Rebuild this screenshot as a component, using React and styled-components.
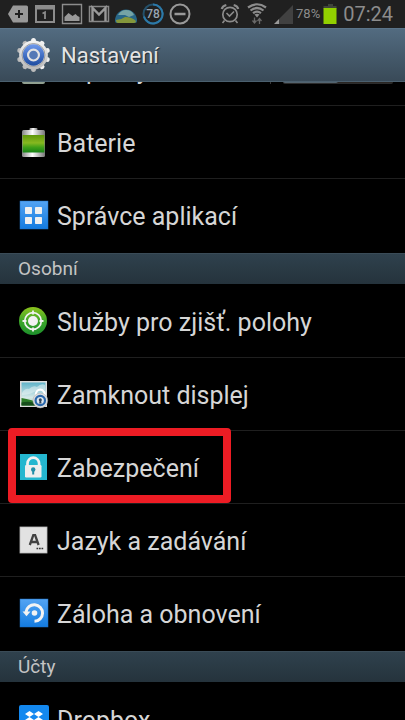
import React from "react";
import styled, { createGlobalStyle } from "styled-components";

const GlobalStyle = createGlobalStyle`
  *, *::before, *::after { box-sizing: border-box; }
  body { margin: 0; background: #000; font-family: Roboto, "Noto Sans", sans-serif; }
`;

const Screen = styled.div`
  display: flex;
  flex-direction: column;
  height: 100vh;
  overflow: hidden;
  background: #000;
  color: #d6d6d6;
`;

const StatusBar = styled.div`
  display: flex;
  flex: none;
  align-items: center;
  justify-content: space-between;
  height: 28px;
  padding: 0 12px 0 7px;
  background: #202020;
  color: #8c8c8c;
  position: relative;
  z-index: 1;
`;

const StatusGroup = styled.div`
  display: flex;
  align-items: center;
  gap: ${(p) => p.$gap}px;
`;

const Glyph = styled.svg`
  display: block;
  flex: none;
`;

const BatteryLevel = styled.span`
  font-size: 13px;
  line-height: 28px;
`;

const Clock = styled.time`
  font-size: 20px;
  line-height: 28px;
  margin-left: 3px;
`;

const Header = styled.header`
  display: flex;
  flex: none;
  align-items: center;
  gap: 10px;
  height: 54px;
  padding: 0 16px;
  background: linear-gradient(#526b80, #394a58);
  border-top: 1px solid #5b7489;
  border-bottom: 1px solid #4b606f;
  position: relative;
  z-index: 1;
`;

const Title = styled.h1`
  margin: 0;
  padding-top: 2px;
  font-size: 22px;
  line-height: 28px;
  font-weight: 400;
  color: #e4e4e4;
  text-shadow: 1px 1px 1px #1e2932;
`;

const Scroller = styled.main`
  flex: 1;
  min-height: 0;
  margin-top: -49px;
  overflow: hidden;
`;

const Group = styled.ul`
  list-style: none;
  margin: 0;
  padding: ${(p) => (p.$first ? 0 : 1)}px 0 1px;
`;

const Row = styled.li`
  display: flex;
  align-items: center;
  position: relative;
  height: 73px;
  padding-right: 12px;
  border-bottom: 1px solid #1f1f1f;

  &:last-child { border-bottom-color: transparent; }
`;

const RowButton = styled.button`
  display: flex;
  flex: 1;
  align-items: center;
  gap: 8px;
  height: 100%;
  padding: 0 0 0 18px;
  border: 0;
  background: none;
  color: inherit;
  font: inherit;
  text-align: left;
`;

const Label = styled.span`
  font-size: 25px;
  line-height: 32px;
  padding-top: 3px;
  white-space: nowrap;
`;

const SectionTitle = styled.h2`
  margin: 0;
  padding: 0 18px;
  font-size: 19px;
  line-height: 30px;
  height: 31px;
  font-weight: 400;
  color: #c4c4c4;
  background: linear-gradient(#2f414d, #25333c);
  border-top: 1px solid #3a4b57;
`;

const Highlight = styled.span`
  position: absolute;
  top: -3px;
  left: 8px;
  width: 223px;
  height: 75px;
  border: 8px solid #ed1c24;
  border-radius: 4px;
  pointer-events: none;
`;

const ToggleSlot = styled.div`
  display: flex;
  align-items: center;
  height: 30px;
  padding-left: 12px;
  border-left: 1px solid #3a3a3a;
`;

const Toggle = styled.button`
  display: flex;
  width: 110px;
  height: 29px;
  padding: 0;
  border: 0;
  border-bottom: 1px solid #2c2c2c;
  border-radius: 2px;
  background: #2a2623;

  &::before {
    content: "";
    width: 50%;
    border-radius: 2px;
    background: #53636e;
  }
`;

const GearIcon = () => (
  <Glyph width="35" height="36" viewBox="0 0 36 36">
    <defs>
      <linearGradient id="gearRim" x1="0" y1="0" x2="0" y2="1">
        <stop offset="0" stopColor="#f4f4f4" /><stop offset="1" stopColor="#b9b9b9" />
      </linearGradient>
      <linearGradient id="gearBlue" x1="0" y1="0" x2="0" y2="1">
        <stop offset="0" stopColor="#6d98ec" /><stop offset="1" stopColor="#1d4b9f" />
      </linearGradient>
    </defs>
    <g fill="url(#gearRim)">
      {[0, 36, 72, 108, 144].map((a) => (
        <path key={a} d="M15.200 5 L15.800 1.500 Q18 -.3 20.200 1.500 L20.800 5 V31 L20.200 34.500 Q18 36.300 15.800 34.500 L15.200 31Z" transform={`rotate(${a} 18 18)`} />
      ))}
      <circle cx="18" cy="18" r="14.800" />
    </g>
    <circle cx="18" cy="18" r="11.800" fill="#d8d8d8" stroke="#8c8c8c" strokeWidth=".8" />
    <circle cx="18" cy="18" r="11" fill="url(#gearBlue)" />
    <circle cx="18" cy="18" r="5.600" fill="#5579b6" stroke="#e2e2e2" strokeWidth="2.200" />
  </Glyph>
);

const Icon = ({ children }) => (
  <Glyph width="31" height="32" viewBox="0 0 31 32" aria-hidden="true">{children}</Glyph>
);

const PowerSavingIcon = () => (
  <Icon><rect x="4" y="3" width="23" height="28" rx="2" fill="#91a091" /><rect x="7" y="6" width="17" height="21" fill="#3f8f35" /></Icon>
);

const BatteryIcon = () => (
  <Icon>
    <defs>
      <linearGradient id="cell" x1="0" y1="0" x2="0" y2="1">
        <stop offset="0" stopColor="#5f970a" /><stop offset=".45" stopColor="#86b820" /><stop offset=".7" stopColor="#3fa018" /><stop offset="1" stopColor="#168215" />
      </linearGradient>
      <linearGradient id="metal">
        <stop offset="0" stopColor="#858585" /><stop offset=".45" stopColor="#fff" /><stop offset="1" stopColor="#777" />
      </linearGradient>
    </defs>
    <rect x="11.500" y="2" width="8" height="4" rx="1" fill="url(#metal)" />
    <rect x="4" y="4" width="23" height="27" rx="1.500" fill="url(#metal)" />
    <rect x="4.600" y="9" width="21.800" height="17.500" fill="url(#cell)" />
  </Icon>
);

const BlueTile = ({ id }) => (
  <>
    <defs>
      <linearGradient id={id} x1="0" y1="0" x2="0" y2="1">
        <stop offset="0" stopColor="#54a4f3" /><stop offset="1" stopColor="#137be0" />
      </linearGradient>
    </defs>
    <rect x="2" y="2" width="28" height="28" fill={`url(#${id})`} stroke="#1c6fc4" strokeWidth=".5" />
  </>
);

const AppsIcon = () => (
  <Icon>
    <BlueTile id="appsTile" />
    <g fill="#f0f0f0">
      <rect x="7" y="8" width="7" height="7" rx=".7" /><rect x="17" y="8" width="7" height="7" rx=".7" />
      <rect x="7" y="18" width="7" height="7" rx=".7" /><rect x="17" y="18" width="7" height="7" rx=".7" />
    </g>
  </Icon>
);

const LocationIcon = () => (
  <Icon>
    <defs>
      <linearGradient id="loc" x1="0" y1="0" x2="0" y2="1">
        <stop offset="0" stopColor="#8cc21c" /><stop offset=".5" stopColor="#3da72a" /><stop offset="1" stopColor="#1c8f2b" />
      </linearGradient>
    </defs>
    <circle cx="15" cy="16" r="14" fill="url(#loc)" />
    <circle cx="15" cy="16" r="8.300" fill="none" stroke="#f2f2f2" strokeWidth="1.700" />
    <path d="M15 5.500v4M15 22.500v4M4.500 16h4M21.500 16h4" stroke="#f2f2f2" strokeWidth="1.800" />
    <circle cx="15" cy="16" r="5" fill="#f2f2f2" />
  </Icon>
);

const LockScreenIcon = () => (
  <Icon>
    <defs>
      <linearGradient id="sky" x1="0" y1="0" x2="0" y2="1">
        <stop offset="0" stopColor="#5fb3c9" /><stop offset=".65" stopColor="#d5e9e8" /><stop offset="1" stopColor="#a9c8b0" />
      </linearGradient>
    </defs>
    <rect x="2" y="3" width="27" height="26" fill="#ddd" />
    <rect x="3.500" y="4.500" width="24" height="23" fill="url(#sky)" />
    <path d="M4 15q3-5 7-4q4-4 8-2q4-4 8-2v5q-7-1-11 2q-5 3-12 3z" fill="#eef6f5" opacity=".5" />
    <path d="M3.500 20l5 1 6 1.500 5 1v4h-16z" fill="#2d7c28" />
    <path d="M3.500 24.500q8-2 15 1v2h-15z" fill="#174d1c" />
    <path d="M18 18v-2a4.300 4.300 0 0 1 8.600 0v2" fill="none" stroke="#fff" strokeWidth="2.300" />
    <circle cx="22.300" cy="22.500" r="7.400" fill="#dedede" stroke="#aaa" strokeWidth=".5" />
    <circle cx="22.300" cy="22.500" r="4.700" fill="#dce6ef" stroke="#2a68ad" strokeWidth="2.200" />
    <circle cx="22.300" cy="21.700" r="1.500" fill="#30465c" /><path d="M21.600 22h1.500l.4 3.500h-2.300z" fill="#30465c" />
  </Icon>
);

const SecurityIcon = () => (
  <Icon>
    <rect x="2" y="3" width="27" height="26" fill="#24b6cf" />
    <path d="M9.500 15v-2.500a5.800 5.800 0 0 1 11.600 0v2.500" fill="none" stroke="#f1f1f1" strokeWidth="2.700" />
    <rect x="7" y="14" width="16.500" height="12.500" rx="1.200" fill="#eee" />
    <circle cx="15.200" cy="18.500" r="2.200" fill="#238fa8" /><path d="M14.200 19h2v4.500h-2z" fill="#238fa8" />
  </Icon>
);

const LanguageIcon = () => (
  <Icon>
    <rect x="2" y="3" width="27" height="26" fill="#e2e2e2" stroke="#bbb" strokeWidth=".8" />
    <path d="M11.800 21L15.300 11.200H17.100L20.600 21M13.200 18h6" fill="none" stroke="#414141" strokeWidth="2.300" />
    <path d="M18.500 24.500h7" stroke="#333" strokeWidth="1.500" strokeDasharray="1.700 .8" />
  </Icon>
);

const BackupIcon = () => (
  <Icon>
    <BlueTile id="backupTile" />
    <path d="M8 15a8.300 8.300 0 1 1 8.500 9.300" fill="none" stroke="#f3f3f3" strokeWidth="3" />
    <path d="M4.500 14.500h8l-4 4.700z" fill="#f3f3f3" />
    <circle cx="16.500" cy="16" r="2.800" fill="#f3f3f3" />
  </Icon>
);

const DropboxIcon = () => (
  <Icon>
    <rect x="1" y="2" width="30" height="30" rx="2" fill="#1388ef" />
    <path d="M11.500 8l4.500 3-4.500 3L7 11zM20.500 8l4.500 3-4.500 3-4.500-3zM11.500 14l4.500 3-4.500 3L7 17zM20.500 14l4.500 3-4.500 3-4.500-3zM16 19l4.500 3-4.500 3-4.500-3z" fill="#fff" />
  </Icon>
);

const StatusIcon = ({ children, width = 22 }) => (
  <Glyph width={width} height="28" viewBox={`0 0 ${width} 28`} fill="none" stroke="currentColor" strokeWidth="2" aria-hidden="true">{children}</Glyph>
);

const Notifications = () => (
  <StatusGroup $gap={5}>
    <StatusIcon>
      <path d="M1 14L6 5.500h13.500q1.500 0 1.500 1.500v14q0 1.500-1.500 1.500H6z" fill="#999" stroke="none" />
      <path d="M12 10v8M8 14h8" stroke="#202020" />
    </StatusIcon>
    <StatusIcon>
      <path d="M2 6v16h18V6z" /><path d="M1 7.500h20" strokeWidth="4" />
      <path d="M8.500 13.500l2.500-1.200V19" strokeWidth="1.800" />
    </StatusIcon>
    <StatusIcon>
      <path d="M1.500 4.500v19h19v-19z" strokeWidth="1.400" />
      <path d="M3.500 21v-4l4-4 4 3 3-2 2 2 2 1v4z" fill="#999" stroke="none" />
    </StatusIcon>
    <StatusIcon>
      <path d="M1.500 6.500h19v15h-19z" stroke="#888" strokeWidth="1.500" />
      <path d="M4.500 21V8L11 14.500 17.500 8v13" stroke="#999" strokeWidth="2.400" />
    </StatusIcon>
    <StatusIcon>
      <path d="M0 21a11 11.500 0 0 1 22 0q0 2-2 2H2q-2 0-2-2z" fill="#286788" stroke="none" />
      <path d="M3 15q3-5 8-5 6 0 8 5l-5 2-4-2z" fill="#75a4a5" stroke="none" />
      <path d="M1 20q5 0 9-3 7 0 11 4 0 2-2 2H3q-2 0-2-3z" fill="#84973c" stroke="none" />
    </StatusIcon>
    <StatusIcon>
      <circle cx="11" cy="14" r="9.500" stroke="#24516b" />
      <path d="M11 4.500a9.500 9.500 0 1 1-9 12" stroke="#2c79a8" />
      <text x="11" y="18" textAnchor="middle" fontSize="12" fontWeight="500" fill="#9aa7b3" stroke="none">78</text>
    </StatusIcon>
    <StatusIcon>
      <circle cx="11" cy="14" r="9.500" stroke="#999" /><path d="M5.500 14h11" stroke="#999" strokeWidth="2.500" />
    </StatusIcon>
  </StatusGroup>
);

const SystemIndicators = () => (
  <StatusGroup $gap={3}>
    <StatusGroup $gap={7}>
      <StatusIcon width={20}>
        <circle cx="10" cy="14.500" r="7.200" strokeWidth="1.700" />
        <path d="M6.500 13l3 3 4.500-4.500M4.500 20.500l-2 2.500M15.500 20.500l2 2.500" strokeWidth="1.600" />
        <path d="M1.800 9q.5-3 4.500-4M18.200 9q-.5-3-4.500-4" strokeWidth="2.200" />
      </StatusIcon>
      <StatusIcon width={20}>
        <path d="M1 7.500q9-6.500 18 0M3.500 10.500q6.500-5 13 0M6 13.200q4-3 8 0" strokeWidth="2.200" />
        <path d="M7.500 14.500L10 17.500l2.500-3q-2.500-1.600-5 0z" fill="currentColor" stroke="none" />
        <path d="M7.500 17.500v5M5.500 20.500l2 2.500 2-2.500M12.500 24v-5M10.500 21l2-2.500 2 2.500" stroke="#696969" strokeWidth="1.300" />
      </StatusIcon>
      <StatusIcon width={19}>
        <path d="M5 19L19 5v19H5z" fill="#414141" stroke="none" /><path d="M0 24l5-5v5z" fill="#999" stroke="none" />
      </StatusIcon>
    </StatusGroup>
    <BatteryLevel>78%</BatteryLevel>
    <StatusIcon width={14}>
      <path d="M5 4h5v2h3.500v3h-13V6H5z" fill="#3f443b" stroke="none" />
      <path d="M.500 8h13v16H.500z" fill="#92d000" stroke="none" />
    </StatusIcon>
    <Clock>07:24</Clock>
  </StatusGroup>
);

const SettingRow = ({ icon: IconShape, label, highlighted, children }) => (
  <Row>
    <RowButton type="button"><IconShape /><Label>{label}</Label></RowButton>
    {children}
    {highlighted && <Highlight />}
  </Row>
);

const PERSONAL = [
  { label: "Služby pro zjišť. polohy", icon: LocationIcon },
  { label: "Zamknout displej", icon: LockScreenIcon },
  { label: "Zabezpečení", icon: SecurityIcon, highlighted: true },
  { label: "Jazyk a zadávání", icon: LanguageIcon },
  { label: "Záloha a obnovení", icon: BackupIcon },
];

export default function App() {
  return (
    <Screen>
      <GlobalStyle />
      <StatusBar><Notifications /><SystemIndicators /></StatusBar>
      <Header><GearIcon /><Title>Nastavení</Title></Header>
      <Scroller>
        <Group $first>
          <SettingRow icon={PowerSavingIcon} label="Úsporný režim">
            <ToggleSlot><Toggle type="button" role="switch" aria-checked="false" aria-label="Úsporný režim" /></ToggleSlot>
          </SettingRow>
          <SettingRow icon={BatteryIcon} label="Baterie" />
          <SettingRow icon={AppsIcon} label="Správce aplikací" />
        </Group>
        <SectionTitle>Osobní</SectionTitle>
        <Group>{PERSONAL.map((item) => <SettingRow key={item.label} {...item} />)}</Group>
        <SectionTitle>Účty</SectionTitle>
        <Group><SettingRow icon={DropboxIcon} label="Dropbox" /></Group>
      </Scroller>
    </Screen>
  );
}
